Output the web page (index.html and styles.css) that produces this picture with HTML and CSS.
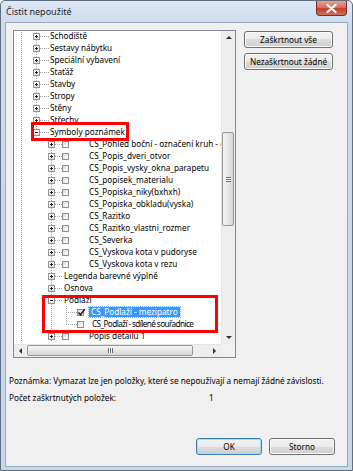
FILE: index.html
```html
<!DOCTYPE html>
<html lang="cs">

<head>
    <meta charset="UTF-8">
    <meta name="viewport" content="width=device-width, initial-scale=1.0">
    <title>Čistit nepoužité</title>
    <link rel="stylesheet" href="styles.css">
</head>

<body>
    <div class="window">
        <div class="titlebar">
            <span class="title">Čistit nepoužité</span>
            <span class="close">
                <svg width="11" height="9" viewBox="0 0 11 9"><path d="M1.5 1 L9.5 8 M9.5 1 L1.5 8" stroke="#fff" stroke-width="2.2" stroke-linecap="round"/></svg>
            </span>
        </div>
        <div class="client">
            <div class="top">
                <div class="tree">
                    <div class="tree-main">
                        <div class="rows">
                            <div class="rows-list">
                                <div class="row"><span class="ind v"></span><span class="ind t"><span class="exp"></span></span><span class="stub w5"></span><span class="txt">Schodiště</span></div>
                                <div class="row"><span class="ind v"></span><span class="ind t"><span class="exp"></span></span><span class="stub w5"></span><span class="txt">Sestavy nábytku</span></div>
                                <div class="row"><span class="ind v"></span><span class="ind t"><span class="exp"></span></span><span class="stub w5"></span><span class="txt">Speciální vybavení</span></div>
                                <div class="row"><span class="ind v"></span><span class="ind t"><span class="exp"></span></span><span class="stub w5"></span><span class="txt">Staťáž</span></div>
                                <div class="row"><span class="ind v"></span><span class="ind t"><span class="exp"></span></span><span class="stub w5"></span><span class="txt">Stavby</span></div>
                                <div class="row"><span class="ind v"></span><span class="ind t"><span class="exp"></span></span><span class="stub w5"></span><span class="txt">Stropy</span></div>
                                <div class="row"><span class="ind v"></span><span class="ind t"><span class="exp"></span></span><span class="stub w5"></span><span class="txt">Stěny</span></div>
                                <div class="row"><span class="ind v"></span><span class="ind t"><span class="exp"></span></span><span class="stub w5"></span><span class="txt">Střechy</span></div>
                                <div class="row"><span class="ind v"></span><span class="ind l"><span class="exp minus"></span></span><span class="stub w5"></span><span class="txt">Symboly poznámek</span></div>

                                <div class="row"><span class="ind v"></span><span class="ind"></span><span class="ind t"><span class="exp"></span></span><span class="stub w3"></span><span class="chk"></span><span class="txt ico">CS_Pohled boční - označení kruh - cíl</span></div>
                                <div class="row"><span class="ind v"></span><span class="ind"></span><span class="ind t"><span class="exp"></span></span><span class="stub w3"></span><span class="chk"></span><span class="txt ico">CS_Popis_dveri_otvor</span></div>
                                <div class="row"><span class="ind v"></span><span class="ind"></span><span class="ind t"><span class="exp"></span></span><span class="stub w3"></span><span class="chk"></span><span class="txt ico">CS_Popis_vysky_okna_parapetu</span></div>
                                <div class="row"><span class="ind v"></span><span class="ind"></span><span class="ind t"><span class="exp"></span></span><span class="stub w3"></span><span class="chk"></span><span class="txt ico">CS_popisek_materialu</span></div>
                                <div class="row"><span class="ind v"></span><span class="ind"></span><span class="ind t"><span class="exp"></span></span><span class="stub w3"></span><span class="chk"></span><span class="txt ico">CS_Popiska_niky(bxhxh)</span></div>
                                <div class="row"><span class="ind v"></span><span class="ind"></span><span class="ind t"><span class="exp"></span></span><span class="stub w3"></span><span class="chk"></span><span class="txt ico">CS_Popiska_obkladu(vyska)</span></div>
                                <div class="row"><span class="ind v"></span><span class="ind"></span><span class="ind t"><span class="exp"></span></span><span class="stub w3"></span><span class="chk"></span><span class="txt ico">CS_Razitko</span></div>
                                <div class="row"><span class="ind v"></span><span class="ind"></span><span class="ind t"><span class="exp"></span></span><span class="stub w3"></span><span class="chk"></span><span class="txt ico">CS_Razitko_vlastni_rozmer</span></div>
                                <div class="row"><span class="ind v"></span><span class="ind"></span><span class="ind t"><span class="exp"></span></span><span class="stub w3"></span><span class="chk"></span><span class="txt ico">CS_Severka</span></div>
                                <div class="row"><span class="ind v"></span><span class="ind"></span><span class="ind t"><span class="exp"></span></span><span class="stub w3"></span><span class="chk"></span><span class="txt ico">CS_Vyskova kota v pudoryse</span></div>
                                <div class="row"><span class="ind v"></span><span class="ind"></span><span class="ind t"><span class="exp"></span></span><span class="stub w3"></span><span class="chk"></span><span class="txt ico">CS_Vyskova kota v rezu</span></div>
                                <div class="row"><span class="ind v"></span><span class="ind"></span><span class="ind t"><span class="exp"></span></span><span class="stub w4"></span><span class="txt">Legenda barevné výplně</span></div>
                                <div class="row"><span class="ind v"></span><span class="ind"></span><span class="ind t"><span class="exp"></span></span><span class="stub w4"></span><span class="txt">Osnova</span></div>
                                <div class="row"><span class="ind v"></span><span class="ind"></span><span class="ind t"><span class="exp minus"></span></span><span class="stub w4"></span><span class="txt">Podlaží</span></div>

                                <div class="row"><span class="ind v"></span><span class="ind"></span><span class="ind v"></span><span class="ind t"></span><span class="stub w3"></span><span class="chk on"><svg width="9" height="9" viewBox="0 0 9 9"><path d="M1.5 4.5 L3.5 6.8 L7.8 1.2" fill="none" stroke="#1a1a1a" stroke-width="1.5"/></svg></span><span class="txt sel">CS_Podlaží - mezipatro</span></div>
                                <div class="row"><span class="ind v"></span><span class="ind"></span><span class="ind v"></span><span class="ind l"></span><span class="stub w3"></span><span class="chk"></span><span class="txt gap">CS_Podlaží - sdílené souřadnice</span></div>

                                <div class="row"><span class="ind v"></span><span class="ind"></span><span class="ind t"><span class="exp"></span></span><span class="stub w3"></span><span class="chk"></span><span class="txt ico">Popis detailu 1</span></div>
                            </div>
                        </div>
                        <div class="vscroll">
                            <div class="sb-btn"><span class="arr up"></span></div>
                            <div class="vtrack">
                                <div class="vthumb"><span class="grip"></span></div>
                            </div>
                            <div class="sb-btn"><span class="arr down"></span></div>
                        </div>
                    </div>
                    <div class="hbar">
                        <div class="hscroll">
                            <div class="sb-btn h"><span class="arr left"></span></div>
                            <div class="htrack">
                                <div class="hthumb"><span class="hgrip"></span></div>
                            </div>
                            <div class="sb-btn h"><span class="arr right"></span></div>
                        </div>
                        <div class="corner"></div>
                    </div>
                    <div class="mark mark-symboly"></div>
                    <div class="mark mark-podlazi"></div>
                </div>
                <div class="side">
                    <button class="btn">Zaškrtnout vše</button>
                    <button class="btn">Nezaškrtnout žádné</button>
                </div>
            </div>
            <p class="note">Poznámka: Vymazat lze jen položky, které se nepoužívají a nemají žádné závislosti.</p>
            <p class="count"><span class="count-label">Počet zaškrtnutých položek:</span><span>1</span></p>
            <div class="footer">
                <button class="btn small def">OK</button>
                <button class="btn small">Storno</button>
            </div>
        </div>
    </div>
</body>

</html>
```

FILE: styles.css
```css
* {
    box-sizing: border-box;
}

body {
    margin: 0;
    font-family: 'Noto Sans', 'Open Sans', sans-serif;
    font-size: 8.2px;
    color: #000;
    background-color: #fff;
}

.window {
    width: 353px;
    height: 471px;
    border: 1px solid #5f6e80;
    border-radius: 5px 5px 0 0;
    background: linear-gradient(#dde8f4, #ccdbec 24px, #c6d7ea);
    padding: 0 4px 3px;
    display: flex;
    flex-direction: column;
}

.titlebar {
    height: 21px;
    display: flex;
    align-items: center;
    justify-content: space-between;
}

.title {
    font-size: 9px;
    padding-left: 1px;
    color: #1e1e1e;
}

.close {
    align-self: flex-start;
    width: 31px;
    height: 15px;
    margin-right: 1px;
    border: 1px solid #7a2b22;
    border-top: none;
    border-radius: 0 0 4px 4px;
    background: linear-gradient(#e8a493, #d7705c 45%, #c23f28 55%, #d2735d);
    display: flex;
    align-items: center;
    justify-content: center;
}

.client {
    flex: 1;
    border: 1px solid #98abc1;
    background-color: #f0f0f0;
    display: flex;
    flex-direction: column;
}

.top {
    display: flex;
    gap: 8px;
    padding: 7px 0 0 7px;
}

.tree {
    position: relative;
    width: 223px;
    height: 328px;
    border: 1px solid #828790;
    background-color: #fff;
    display: flex;
    flex-direction: column;
}

.tree-main {
    display: flex;
    height: 313px;
}

.rows {
    flex: 1;
    overflow: hidden;
}

.rows-list {
    margin-top: -1px;
}

.row {
    display: flex;
    height: 12px;
    white-space: nowrap;
}

.ind {
    flex: none;
    display: block;
    width: 15px;
    height: 12px;
}

.ind.v {
    background: repeating-linear-gradient(#a0a0a0 0 1px, transparent 1px 2px) 7px 0 / 1px 12px no-repeat;
}

.ind.t {
    background:
        repeating-linear-gradient(#a0a0a0 0 1px, transparent 1px 2px) 7px 0 / 1px 12px no-repeat,
        repeating-linear-gradient(to right, #a0a0a0 0 1px, transparent 1px 2px) 9px 6px / 6px 1px no-repeat;
}

.ind.l {
    background:
        repeating-linear-gradient(#a0a0a0 0 1px, transparent 1px 2px) 7px 0 / 1px 7px no-repeat,
        repeating-linear-gradient(to right, #a0a0a0 0 1px, transparent 1px 2px) 9px 6px / 6px 1px no-repeat;
}

.stub {
    flex: none;
    height: 12px;
    background: repeating-linear-gradient(to right, #a0a0a0 0 1px, transparent 1px 2px) 0 6px / 100% 1px no-repeat;
}

.w3 {
    width: 3px;
}

.w4 {
    width: 4px;
}

.w5 {
    width: 5px;
}

.exp {
    display: block;
    width: 7px;
    height: 7px;
    margin: 3px 0 0 4px;
    border: 1px solid #939393;
    background:
        linear-gradient(#222, #222) center / 3px 1px no-repeat,
        linear-gradient(#222, #222) center / 1px 3px no-repeat,
        linear-gradient(#fff, #e4e4e4);
}

.exp.minus {
    background:
        linear-gradient(#222, #222) center / 3px 1px no-repeat,
        linear-gradient(#fff, #e4e4e4);
}

.chk {
    flex: none;
    position: relative;
    width: 7px;
    height: 7px;
    margin-top: 3px;
    border: 1px solid #8f8f8f;
    background: linear-gradient(135deg, #d8d8d8, #fff);
}

.chk svg {
    position: absolute;
    left: -1px;
    top: -2px;
}

.txt {
    line-height: 12px;
    padding-left: 1px;
}

.ico {
    margin-left: 19px;
}

.gap {
    margin-left: 7px;
    letter-spacing: -0.6px;
}

.sel {
    margin: 1px 0 0 5px;
    height: 10px;
    line-height: 10px;
    padding: 0 2px;
    background-color: #3399ff;
    color: #fff;
    outline: 1px dotted #7fbfff;
}

.vscroll {
    flex: none;
    width: 14px;
    display: flex;
    flex-direction: column;
    background-color: #eeeeee;
    border-left: 1px solid #e4e4e4;
}

.sb-btn {
    flex: none;
    height: 13px;
    display: flex;
    align-items: center;
    justify-content: center;
}

.sb-btn.h {
    width: 13px;
    height: 100%;
}

.vtrack {
    flex: 1;
    padding: 88px 1px 0 0;
}

.vthumb {
    height: 94px;
    border: 1px solid #979797;
    border-radius: 2px;
    background: linear-gradient(to right, #f5f5f5, #e6e6e6 50%, #d6d6d6);
    display: flex;
    align-items: center;
    justify-content: center;
}

.grip {
    width: 5px;
    height: 5px;
    background: repeating-linear-gradient(#6b6b6b 0 1px, #fff 1px 2px);
}

.hbar {
    display: flex;
    height: 13px;
}

.hscroll {
    flex: 1;
    display: flex;
    background-color: #eeeeee;
    border-top: 1px solid #e4e4e4;
}

.htrack {
    flex: 1;
    padding-bottom: 1px;
}

.hthumb {
    width: 166px;
    height: 100%;
    border: 1px solid #979797;
    border-radius: 2px;
    background: linear-gradient(#f5f5f5, #e6e6e6 50%, #d6d6d6);
    display: flex;
    align-items: center;
    justify-content: center;
}

.hgrip {
    width: 5px;
    height: 5px;
    background: repeating-linear-gradient(to right, #6b6b6b 0 1px, #fff 1px 2px);
}

.corner {
    width: 14px;
    background-color: #f0f0f0;
}

.arr {
    width: 0;
    height: 0;
    border: 3px solid transparent;
}

.arr.up {
    border-bottom-color: #333;
    border-top-width: 0;
}

.arr.down {
    border-top-color: #333;
    border-bottom-width: 0;
}

.arr.left {
    border-right-color: #333;
    border-left-width: 0;
}

.arr.right {
    border-left-color: #333;
    border-right-width: 0;
}

.mark {
    position: absolute;
    border: 3px solid #f00;
}

.mark-symboly {
    left: 17px;
    top: 91px;
    width: 98px;
    height: 19px;
}

.mark-podlazi {
    left: 28px;
    top: 264px;
    width: 176px;
    height: 38px;
}

.side {
    display: flex;
    flex-direction: column;
    gap: 5px;
    padding-top: 1px;
}

.btn {
    width: 89px;
    height: 17px;
    padding: 0;
    font: inherit;
    color: #000;
    border: 1px solid #707070;
    border-radius: 3px;
    background: linear-gradient(#f2f2f2, #ebebeb 50%, #dddddd 50%, #cfcfcf);
    box-shadow: inset 0 0 0 1px #fbfbfb;
}

.btn.small {
    width: 66px;
}

.btn.def {
    border-color: #3c7fb1;
    box-shadow: inset 0 0 0 1px #9fdcfb;
}

.note {
    margin: 17px 0 0 3px;
    line-height: 12px;
}

.count {
    display: flex;
    margin: 5px 0 0 3px;
    line-height: 12px;
}

.count-label {
    width: 200px;
}

.footer {
    margin-top: auto;
    display: flex;
    justify-content: flex-end;
    gap: 7px;
    padding: 0 12px 11px 0;
}
```
